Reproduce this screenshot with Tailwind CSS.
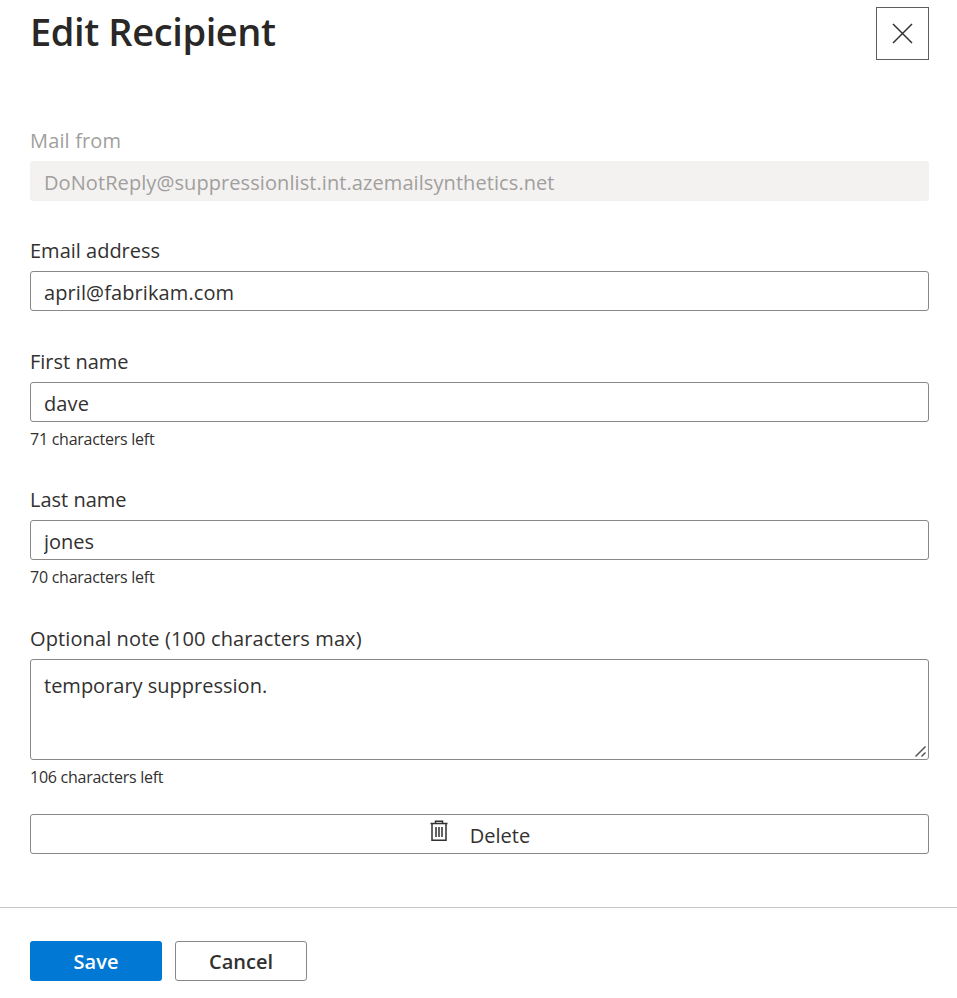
<!DOCTYPE html>
<html lang="en"><head><meta charset="utf-8"><title>Edit Recipient</title>
<script src="https://cdn.jsdelivr.net/npm/@tailwindcss/browser@4"></script></head>
<body class="bg-white">
<form class="h-[998px] overflow-hidden flex flex-col text-[20px] leading-[28px] text-[#323130] font-['Open_Sans','Noto_Sans',sans-serif]">
<header class="h-[126px] pl-[30px] pr-7 pt-[7px] flex justify-between items-start">
<h1 class="-mt-px text-[38px] leading-[50px] tracking-[-0.4px] font-semibold text-[#292827] whitespace-nowrap">Edit Recipient</h1>
<button type="button" aria-label="Close" class="size-[53px] border border-[#605e5c] grid place-items-center"><svg width="21" height="21" viewBox="0 0 21 21" fill="none" stroke="#323130" stroke-width="1.5"><path d="M1 1 20 20M20 1 1 20"/></svg></button>
</header>
<section class="h-[781px] pl-[30px] pr-7 flex flex-col shrink-0">
<div class="h-[110px] text-[#a19f9d]"><label for="from" class="block h-[35px] pt-px tracking-[0.15px]">Mail from</label><input id="from" disabled value="DoNotReply@suppressionlist.int.azemailsynthetics.net" class="block w-full h-10 px-[14px] pt-[3px] rounded-[3px] bg-[#f3f2f1] tracking-[0.08px]"></div>
<div class="h-[111px]"><label for="email" class="block h-[35px] pt-px">Email address</label><input id="email" value="april@fabrikam.com" class="block w-full h-10 px-[13px] pt-[3px] rounded-[3px] border border-[#8a8886] tracking-[0.1px]"></div>
<div class="h-[138px]"><label for="first" class="block h-[35px] pt-px">First name</label><input id="first" value="dave" class="block w-full h-10 px-[13px] pt-[3px] rounded-[3px] border border-[#8a8886] tracking-[0.1px]"><p class="text-[16px] leading-[22px] pt-[6px] tracking-[-0.26px]">71 characters left</p></div>
<div class="h-[139px]"><label for="last" class="block h-[35px] pt-px">Last name</label><input id="last" value="jones" class="block w-full h-10 px-[13px] pt-[3px] rounded-[3px] border border-[#8a8886]"><p class="text-[16px] leading-[22px] pt-[6px] tracking-[-0.26px]">70 characters left</p></div>
<div class="h-[190px]"><label for="note" class="block h-[35px] pt-px tracking-[0.11px]">Optional note (100 characters max)</label>
<div class="relative h-[101px]"><textarea id="note" class="block resize-none overflow-hidden w-full h-[101px] px-[13px] pt-[12px] rounded-[3px] border border-[#8a8886]">temporary suppression.</textarea><svg class="absolute right-[2px] bottom-[2px]" width="12" height="12" viewBox="0 0 12 12" fill="none" stroke="#555" stroke-width="1.5"><path d="M.5 10.5 10.5 .5M6.5 10.5 10.5 6.5"/></svg></div>
<p class="text-[16px] leading-[22px] pt-[6px] tracking-[-0.26px]">106 characters left</p></div>
<button type="button" class="h-10 shrink-0 border border-[#8a8886] rounded-[3px] flex justify-center"><svg class="mt-[5px] ml-px mr-[22px]" width="18" height="22" viewBox="0 0 18 22" fill="none" stroke="#323130" stroke-width="1.5"><path d="M.5 3.5h17M5.5 3V1.2h7V3M2 4v16.3h14V4M6 7v10M9 7v10M12 7v10"/></svg><span class="mt-[7px]">Delete</span></button>
</section>
<footer class="h-[91px] border-t border-[#c8c6c4] pt-[33px] pl-[30px] flex gap-[13px] font-semibold shrink-0">
<button type="button" class="w-[132px] h-10 rounded-[3px] bg-[#0078d4] text-white pt-px">Save</button>
<button type="button" class="w-[132px] h-10 rounded-[3px] border border-[#8a8886] pt-px">Cancel</button>
</footer>
</form></body></html>
